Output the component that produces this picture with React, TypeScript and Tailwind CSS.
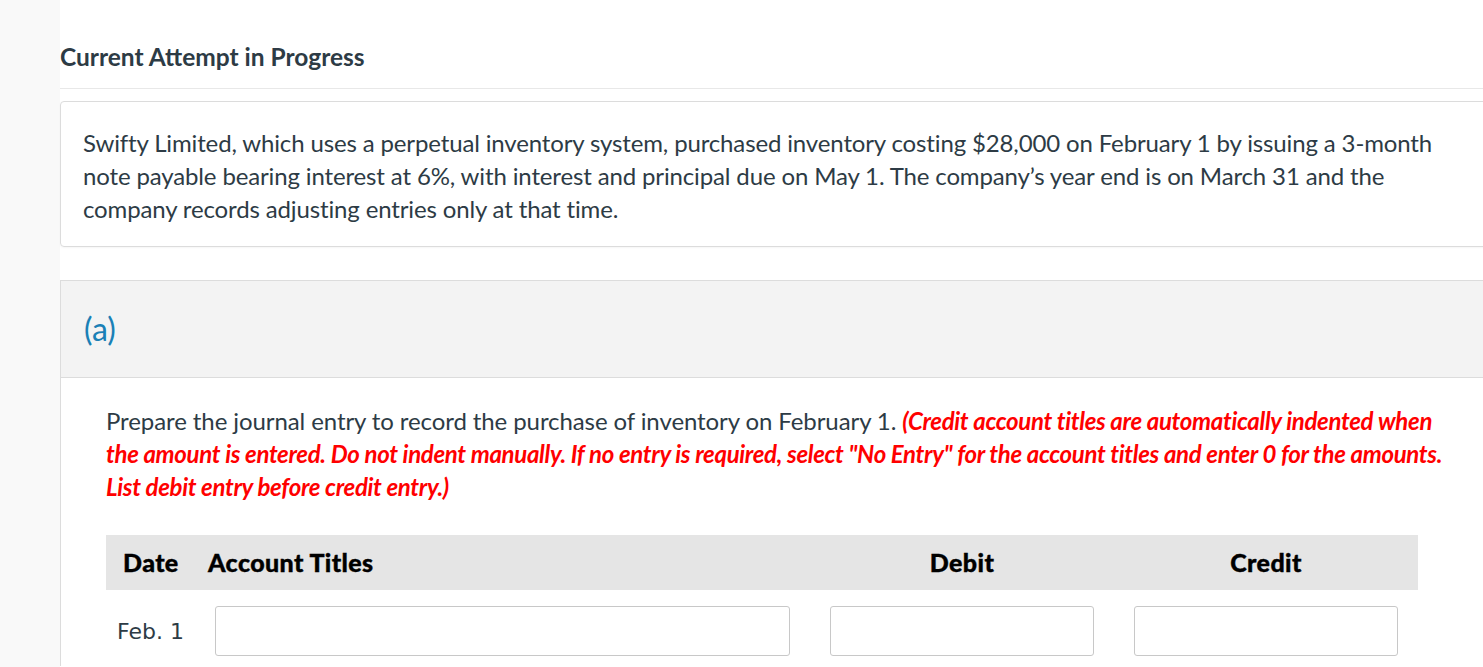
export default function App() {
    return (
        <div className="flex min-h-[667px] w-[1483px] overflow-hidden bg-white font-['Lato','Noto_Sans',sans-serif] text-[#2d3b45]">
            <div className="w-[60px] shrink-0 bg-[#f9f9f9]" />

            <div className="w-[1440px] shrink-0">
                <h2 className="pt-[44px] pb-[18px] text-[24.5px] font-bold leading-[26px] border-b border-[#e8e8e8]">
                    Current Attempt in Progress
                </h2>

                <div className="mt-[12px] rounded-[4px] border border-[#dcdcdc] pl-[22px] pr-[14px] pt-[24px] pb-[21px] shadow-[0_1px_2px_rgba(0,0,0,0.04)]">
                    <p className="w-[1370px] text-[24px] tracking-[-0.14px] leading-[33px]">
                        Swifty Limited, which uses a perpetual inventory system, purchased inventory costing $28,000 on February 1 by issuing a 3-month note payable bearing interest at 6%, with interest and principal due on May 1. The company’s year end is on March 31 and the company records adjusting entries only at that time.
                    </p>
                </div>

                <div className="mt-[33px] border-l border-t border-[#dcdcdc]">
                    <div className="flex h-[97px] items-center bg-[#f3f3f3] pl-[23px] border-b border-[#dcdcdc]">
                        <span className="text-[32px] text-[#1a80b6]">(a)</span>
                    </div>

                    <div className="pl-[45px] pt-[26px] pb-[10px]">
                        <p className="w-[1348px] text-[24px] tracking-[-0.09px] leading-[33px]">
                            Prepare the journal entry to record the purchase of inventory on February 1.{' '}
                            <em className="font-bold text-[#ff0000] tracking-[-0.32px]">
                                (Credit account titles are automatically indented when the amount is entered. Do not indent manually. If no entry is required, select "No Entry" for the account titles and enter 0 for the amounts. List debit entry before credit entry.)
                            </em>
                        </p>

                        <div className="mt-[32px] w-[1312px]">
                            <div className="grid h-[55px] grid-cols-[101px_603px_304px_304px] items-center bg-[#e5e5e5] text-[25px] font-black tracking-[0.4px] text-black [-webkit-text-stroke:0.4px_black]">
                                <span className="pl-[17px]">Date</span>
                                <span className="pl-[1px]">Account Titles</span>
                                <span className="text-center">Debit</span>
                                <span className="text-center">Credit</span>
                            </div>

                            <div className="mt-[16px] grid grid-cols-[101px_603px_304px_304px] items-center">
                                <span className="pl-[11px] font-['DejaVu_Sans',sans-serif] text-[22px] text-[#2d3b45]">Feb. 1</span>
                                <div className="pl-[8px] pr-[20px]">
                                    <input className="block h-[50px] w-full rounded-[3px] border border-[#c8c8c8] bg-white" />
                                </div>
                                <div className="px-[20px]">
                                    <input className="block h-[50px] w-full rounded-[3px] border border-[#c8c8c8] bg-white" />
                                </div>
                                <div className="px-[20px]">
                                    <input className="block h-[50px] w-full rounded-[3px] border border-[#c8c8c8] bg-white" />
                                </div>
                            </div>
                        </div>
                    </div>
                </div>
            </div>
        </div>
    );
}
